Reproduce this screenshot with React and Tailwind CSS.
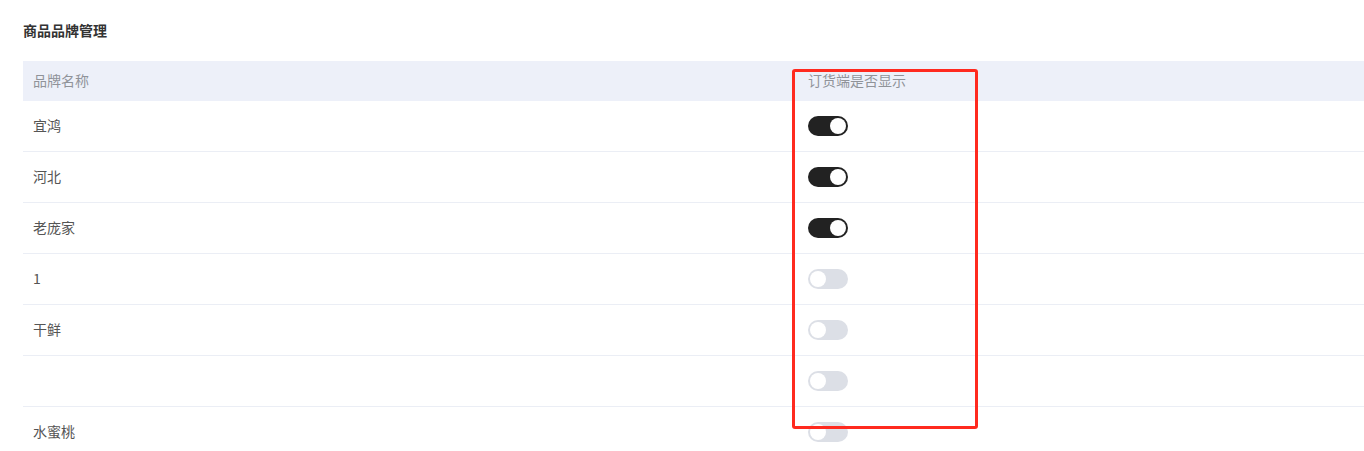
import React from 'react';

const brands = [
  { name: '宜鸿', show: true },
  { name: '河北', show: true },
  { name: '老庞家', show: true },
  { name: '1', show: false },
  { name: '干鲜', show: false },
  { name: '', show: false },
  { name: '水蜜桃', show: false },
];

const Switch = ({ on }) => (
  <div
    className={`w-10 h-5 rounded-full flex items-center px-[2px] ${
      on ? 'bg-[#222222] justify-end' : 'bg-[#dcdfe6] justify-start'
    }`}
  >
    <div className="w-4 h-4 rounded-full bg-white" />
  </div>
);

const App = () => {
  return (
    <div
      className="relative w-[1364px] h-[451px] overflow-hidden bg-white pl-[23px] pt-5"
      style={{ fontFamily: '"Noto Sans CJK SC", "Liberation Sans", sans-serif' }}
    >
      {/* Title */}
      <h1 className="h-5 leading-5 text-[14px] font-bold text-[#333333]">商品品牌管理</h1>

      {/* Table */}
      <div className="mt-[21px] w-[1341px]">
        <div className="flex h-10 items-center bg-[#edf0f9] text-[14px] text-[#909399]">
          <div className="w-[775px] pl-[10px] -mt-[2px]">品牌名称</div>
          <div className="flex-1 pl-[10px] -mt-[2px]">订货端是否显示</div>
        </div>
        {brands.map((b, i) => (
          <div
            key={i}
            className="flex h-[51px] items-center border-b border-[#ebeef5] text-[14px] text-[#555555]"
          >
            <div className="w-[775px] pl-[10px] -mt-[2px]">{b.name}</div>
            <div className="flex-1 pl-[10px]">
              <Switch on={b.show} />
            </div>
          </div>
        ))}
      </div>

      {/* Highlight box */}
      <div className="absolute left-[792px] top-[69px] w-[186px] h-[360px] border-[3px] border-[#ff2a1f] rounded-[3px] pointer-events-none" />
    </div>
  );
};

export default App;
